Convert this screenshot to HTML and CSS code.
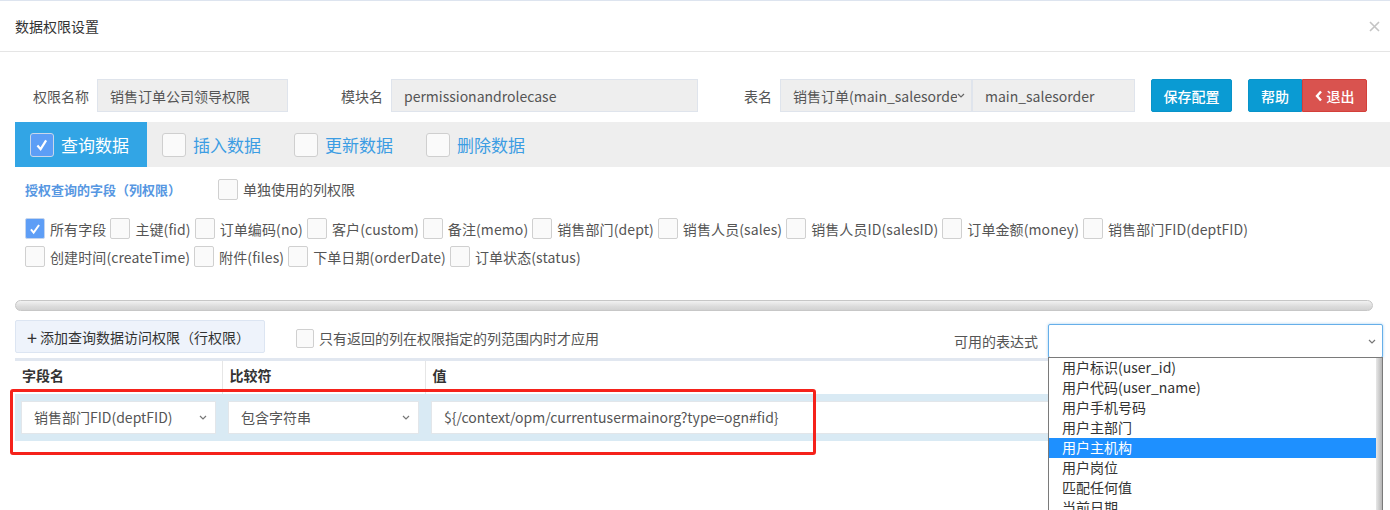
FILE: index.html
```html
<!DOCTYPE html>
<html lang="zh-CN">
<head>
<meta charset="utf-8">
<title>数据权限设置</title>
<link rel="stylesheet" href="styles.css">
</head>
<body>
<div class="modal">
  <div class="modal-header">
    <span class="modal-title">数据权限设置</span>
    <svg class="close" viewBox="0 0 11 11" width="11" height="11"><path d="M1 1L10 10M10 1L1 10" stroke="#c4c4c4" stroke-width="1.6" fill="none"/></svg>
  </div>
  <div class="modal-body">
    <div class="form-row">
      <span class="lbl">权限名称</span>
      <div class="inp w-name">销售订单公司领导权限</div>
      <span class="lbl ml-mod">模块名</span>
      <div class="inp w-mod">permissionandrolecase</div>
      <span class="lbl ml-tab">表名</span>
      <div class="inp sel w-tsel"><span class="clip">销售订单(main_salesorder)</span><svg class="chev" viewBox="0 0 8 5" width="8" height="5"><path d="M1 1L4 4L7 1" stroke="#666" stroke-width="1.2" fill="none"/></svg></div>
      <div class="inp w-tname">main_salesorder</div>
      <button class="btn btn-info btn-save">保存配置</button>
      <div class="btn-group">
        <button class="btn btn-info btn-help">帮助</button>
        <button class="btn btn-danger btn-exit"><svg viewBox="0 0 8 12" width="8" height="12"><path d="M6 1.5L2 6L6 10.5" stroke="#fff" stroke-width="2.4" fill="none"/></svg>退出</button>
      </div>
    </div>

    <div class="tabs">
      <div class="tab active"><span class="tcb checked"><svg viewBox="0 0 24 24" width="22" height="22"><path d="M7 12.5L10.5 16.5L16.5 7" stroke="#fff" stroke-width="2.4" fill="none"/></svg></span><span class="tab-text">查询数据</span></div>
      <div class="tab"><span class="tcb"></span><span class="tab-text">插入数据</span></div>
      <div class="tab"><span class="tcb"></span><span class="tab-text">更新数据</span></div>
      <div class="tab"><span class="tcb"></span><span class="tab-text">删除数据</span></div>
    </div>

    <div class="col-title-row">
      <span class="col-title">授权查询的字段（列权限）</span>
      <span class="fld"><span class="cb"></span><span>单独使用的列权限</span></span>
    </div>

    <div class="fields">
      <div class="fields-row">
        <span class="fld"><span class="cb checked"><svg viewBox="0 0 20 20" width="18" height="18"><path d="M5.5 10.5L8.5 14L14.5 5.5" stroke="#fff" stroke-width="2.2" fill="none"/></svg></span><span>所有字段</span></span>
        <span class="fld"><span class="cb"></span><span>主键(fid)</span></span>
        <span class="fld"><span class="cb"></span><span>订单编码(no)</span></span>
        <span class="fld"><span class="cb"></span><span>客户(custom)</span></span>
        <span class="fld"><span class="cb"></span><span>备注(memo)</span></span>
        <span class="fld"><span class="cb"></span><span>销售部门(dept)</span></span>
        <span class="fld"><span class="cb"></span><span>销售人员(sales)</span></span>
        <span class="fld"><span class="cb"></span><span>销售人员ID(salesID)</span></span>
        <span class="fld"><span class="cb"></span><span>订单金额(money)</span></span>
        <span class="fld"><span class="cb"></span><span>销售部门FID(deptFID)</span></span>
      </div>
      <div class="fields-row">
        <span class="fld"><span class="cb"></span><span>创建时间(createTime)</span></span>
        <span class="fld"><span class="cb"></span><span>附件(files)</span></span>
        <span class="fld"><span class="cb"></span><span>下单日期(orderDate)</span></span>
        <span class="fld"><span class="cb"></span><span>订单状态(status)</span></span>
      </div>
    </div>

    <div class="hscroll"></div>

    <div class="toolbar">
      <button class="add-btn"><span class="plus">+</span>添加查询数据访问权限（行权限）</button>
      <span class="fld only"><span class="cb"></span><span>只有返回的列在权限指定的列范围内时才应用</span></span>
      <div class="expr">
        <span class="expr-lbl">可用的表达式</span>
        <div class="expr-select">
          <svg class="chev" viewBox="0 0 8 5" width="8" height="5"><path d="M1 1L4 4L7 1" stroke="#777" stroke-width="1.2" fill="none"/></svg>
          <ul class="dropdown">
            <li>用户标识(user_id)</li>
            <li>用户代码(user_name)</li>
            <li>用户手机号码</li>
            <li>用户主部门</li>
            <li class="hl">用户主机构</li>
            <li>用户岗位</li>
            <li>匹配任何值</li>
            <li>当前日期</li>
          </ul>
        </div>
      </div>
    </div>

    <table class="rules">
      <thead>
        <tr><th class="c1">字段名</th><th class="c2">比较符</th><th class="c3">值</th></tr>
      </thead>
      <tbody>
        <tr>
          <td><div class="cell-sel"><span>销售部门FID(deptFID)</span><svg class="chev" viewBox="0 0 8 5" width="8" height="5"><path d="M1 1L4 4L7 1" stroke="#777" stroke-width="1.2" fill="none"/></svg></div></td>
          <td><div class="cell-sel"><span>包含字符串</span><svg class="chev" viewBox="0 0 8 5" width="8" height="5"><path d="M1 1L4 4L7 1" stroke="#777" stroke-width="1.2" fill="none"/></svg></div></td>
          <td><div class="cell-inp">${/context/opm/currentusermainorg?type=ogn#fid}</div></td>
        </tr>
      </tbody>
    </table>

    <div class="annot"></div>
  </div>
</div>
</body>
</html>
```

FILE: styles.css
```css
* { box-sizing: border-box; }
html, body { margin: 0; padding: 0; background: #fff; }
body {
  width: 1390px;
  height: 510px;
  overflow: hidden;
  font-family: "Noto Sans CJK SC", "Microsoft YaHei", sans-serif;
  font-size: 14px;
  color: #555;
}
ul { margin: 0; padding: 0; list-style: none; }
button { font-family: inherit; cursor: pointer; }

.modal { border-top: 1px solid #dde4ef; }
.modal-header {
  height: 51px;
  display: flex;
  align-items: center;
  justify-content: space-between;
  padding: 0 10px 0 15px;
  border-bottom: 1px solid #e5e5e5;
}
.modal-title { color: #333; font-size: 14px; }

.modal-body { position: relative; padding: 27px 0 0 15px; }

/* top form */
.form-row { display: flex; align-items: center; height: 33px; padding-left: 18px; }
.lbl { margin-right: 8px; white-space: nowrap; color: #555; }
.ml-mod { margin-left: 53px; }
.ml-tab { margin-left: 46px; }
.inp {
  height: 33px;
  background: #eee;
  border: 1px solid #dfe4ec;
  padding: 0 12px;
  display: flex;
  align-items: center;
  white-space: nowrap;
  overflow: hidden;
  color: #555;
}
.w-name { width: 191px; }
.w-mod { width: 307px; }
.w-tsel { width: 192px; justify-content: space-between; padding-right: 6px; }
.w-tname { width: 163px; }
.clip { overflow: hidden; flex: 1; }
.chev { flex: none; }
.btn {
  height: 33px;
  border: 1px solid transparent;
  color: #fff;
  font-size: 14px;
  font-weight: 500;
  padding: 0;
  display: flex;
  align-items: center;
  justify-content: center;
  border-radius: 2px;
}
.btn-info { background: #0a9bd3; border-color: #0893c9; }
.btn-danger { background: #d9534f; border-color: #d43f3a; }
.btn-save { width: 81px; margin-left: 16px; }
.btn-group { display: flex; margin-left: 16px; }
.btn-help { width: 54px; border-radius: 2px 0 0 2px; }
.btn-exit { width: 65px; border-radius: 0 2px 2px 0; gap: 4px; }

/* tabs */
.tabs { display: flex; margin-top: 10px; height: 45px; background: #eee; }
.tab { width: 132px; display: flex; align-items: center; padding-left: 15px; gap: 7px; }
.tab.active { background: #32a5e5; }
.tcb {
  width: 24px; height: 24px;
  border: 1px solid #cfcfcf;
  border-radius: 3px;
  background: #fafafa;
  display: flex; align-items: center; justify-content: center;
}
.tcb.checked { background: #5c9ef6; border-color: #c9d7ea; }
.tab-text { font-size: 17px; color: #3c9de3; }
.tab.active .tab-text { color: #fff; }

/* column permission */
.col-title-row { display: flex; align-items: center; height: 22px; margin-top: 11px; padding-left: 10px; }
.col-title { color: #5797e2; font-weight: bold; font-size: 13px; margin-right: 37px; }

.fields { padding-left: 10px; margin-top: 18px; }
.fields-row { display: flex; align-items: center; height: 21px; }
.fields-row + .fields-row { margin-top: 7px; }
.fld { display: flex; align-items: center; gap: 5px; margin-right: 4px; white-space: nowrap; color: #555; }
.fields .fld > span:last-child { letter-spacing: 0.1px; }
.cb {
  width: 20px; height: 21px;
  border: 1px solid #d0d0d0;
  border-radius: 2px;
  background: #fafafa;
  display: flex; align-items: center; justify-content: center;
  flex: none;
}
.cb.checked { background: #5e9ef6; border-color: #c4d5ee; }

.hscroll {
  margin-top: 33px;
  width: 1358px;
  height: 11px;
  border-radius: 6px;
  border: 1px solid #c7c7c7;
  background: linear-gradient(#f2f2f2, #dcdcdc 60%, #d2d2d2);
}

/* row permission toolbar */
.toolbar { display: flex; align-items: flex-start; margin-top: 9px; height: 38px; margin-right: 7px; }
.add-btn {
  width: 250px; height: 33px;
  background: #eef3fb;
  border: 1px solid #dce5f2;
  border-radius: 2px;
  color: #333;
  font-size: 14px;
  text-align: left;
  padding-left: 11px;
  display: flex; align-items: center;
}
.plus { font-size: 18px; margin-right: 3px; line-height: 1; }
.only { margin-left: 31px; margin-top: 8px; }
.only .cb { width: 18px; height: 19px; }
.expr { margin-left: auto; display: flex; align-items: center; margin-top: 4px; }
.expr-lbl { margin-right: 10px; color: #555; }
.expr-select {
  position: relative;
  width: 335px; height: 34px;
  border: 1px solid #66afe9;
  box-shadow: 0 0 3px rgba(102,175,233,.6);
  border-radius: 2px;
  display: flex; align-items: center; justify-content: flex-end;
  padding-right: 6px;
  background: #fff;
}
.dropdown {
  position: absolute;
  top: 32px; left: -1px;
  width: 335px; height: 160px;
  border: 1px solid #7a7a7a;
  background: #fff;
  z-index: 5;
  overflow: hidden;
  padding-right: 6px;
}
.dropdown::after {
  content: "";
  position: absolute;
  top: 0; right: 0;
  width: 6px; height: 100%;
  background: linear-gradient(90deg, #e8e8e8, #b5b5b5);
}
.dropdown li { height: 20px; line-height: 18px; padding-left: 13px; color: #333; font-size: 14px; white-space: nowrap; }
.dropdown li.hl { background: #1e90ff; color: #fff; }

/* rules table */
.rules { border-collapse: collapse; width: 1368px; }
.rules thead th {
  border-top: 3px solid #e1e7f0;
  height: 34px;
  text-align: left;
  padding: 0 7px 4px;
  font-weight: bold;
  color: #333;
  border-left: 1px solid #e6e6e6;
}
.rules thead th.c1 { width: 207px; border-left: none; }
.rules thead th.c2 { width: 203px; }
.rules tbody tr { background: #d9eaf4; }
.rules tbody td { padding: 7px 6px; height: 47px; }
.cell-sel, .cell-inp {
  height: 33px;
  background: #fff;
  border: 1px solid #e2e6ea;
  display: flex; align-items: center;
  padding: 0 8px 0 12px;
  color: #555;
  white-space: nowrap;
}
.cell-sel { justify-content: space-between; }

.annot {
  position: absolute;
  left: 10px; top: 337px;
  width: 806px; height: 66px;
  border: 3px solid #f5221b;
  border-radius: 3px;
  pointer-events: none;
}
```
